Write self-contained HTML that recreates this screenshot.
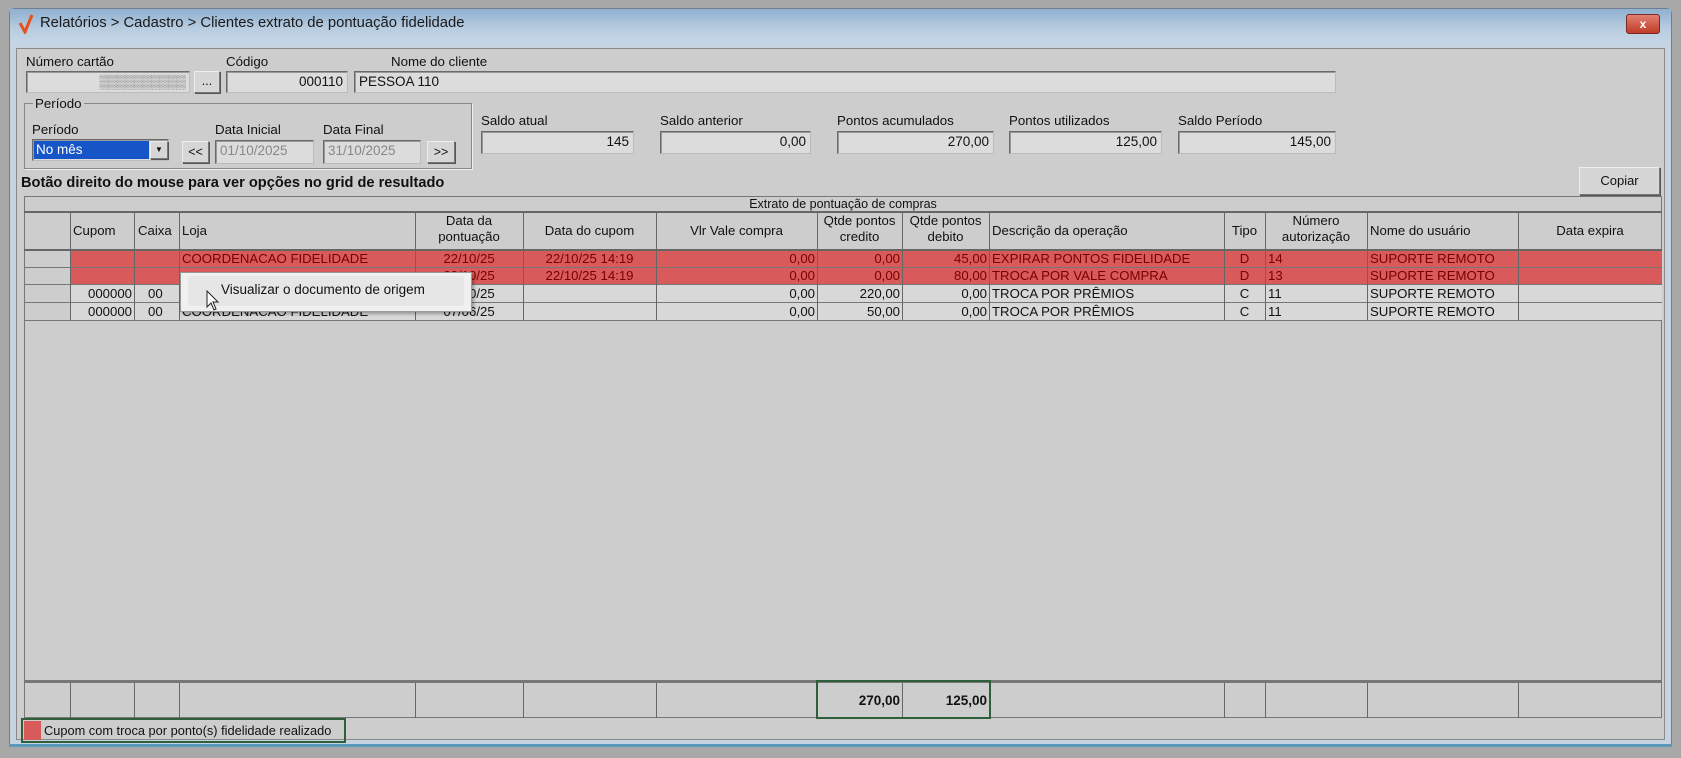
<!DOCTYPE html>
<html><head><meta charset="utf-8"><style>
*{box-sizing:border-box;margin:0;padding:0}
body{width:1681px;height:758px;background:#a8a8a8;font-family:"Liberation Sans",sans-serif;font-size:12px;color:#111;position:relative;overflow:hidden}
.a{position:absolute}
.win{left:9px;top:8px;width:1663px;height:739px;background:#c6d4e2;border:1px solid #6f7f90;border-radius:6px 6px 0 0}
.title{left:10px;top:9px;width:1661px;height:34px;background:linear-gradient(#8fb0d0,#b9cde0 60%,#c5d6e6)}
.panel{left:16px;top:48px;width:1649px;height:692px;background:#cdcdcd;border:1px solid #8a8a8a}
.lbl{position:absolute;font-size:13.3px;white-space:nowrap}
.fld{position:absolute;background:#dcdcdc;border:1px solid #6a6a6a;border-right-color:#bbb;border-bottom-color:#bbb;box-shadow:inset 1px 1px 0 #999;font-size:13.5px;line-height:20px;padding:0 4px;white-space:nowrap}
.r{text-align:right}
.btn{position:absolute;background:#d6d6d6;border:1px solid #777;border-top-color:#eee;border-left-color:#eee;box-shadow:1px 1px 0 #555;text-align:center;font-size:12.5px}
.grid{left:24px;top:196px;width:1638px;height:522px;background:#cdcdcd;border:1px solid #777}
.vl{position:absolute;width:1px;background:#666}
.hl{position:absolute;height:1px;background:#777}
.c{position:absolute;font-size:13.2px;white-space:nowrap;overflow:hidden;line-height:17px}
.red{background:#d95a5a}
.rt{color:#7a0000}
</style></head><body>
<div class="a win"></div>
<div class="a title"></div>
<svg class="a" style="left:18px;top:14px" width="16" height="20"><path d="M2 9 L7 18 L14 1" stroke="#e5501b" stroke-width="3" fill="none"/></svg>
<div class="lbl" style="left:40px;top:15px;font-size:14.8px;color:#1a1a1a">Relatórios &gt; Cadastro &gt; Clientes extrato de pontuação fidelidade</div>
<div class="a" style="left:1626px;top:14px;width:34px;height:20px;background:linear-gradient(#e08070,#c03a28);border:1px solid #7a2a20;border-radius:3px;color:#fff;font-weight:bold;text-align:center;line-height:18px;font-size:12px">x</div>
<div class="a panel"></div>

<div class="lbl" style="left:26px;top:54px">Número cartão</div>
<div class="fld" style="left:26px;top:71px;width:164px;height:22px;color:#777;letter-spacing:-1px;text-align:right">▒▒▒▒▒▒▒▒▒▒</div>
<div class="btn" style="left:194px;top:71px;width:26px;height:22px;line-height:18px">...</div>
<div class="lbl" style="left:226px;top:54px">Código</div>
<div class="fld r" style="left:226px;top:71px;width:122px;height:22px">000110</div>
<div class="lbl" style="left:391px;top:54px">Nome do cliente</div>
<div class="fld" style="left:354px;top:71px;width:982px;height:22px">PESSOA 110</div>

<div class="a" style="left:24px;top:103px;width:448px;height:66px;border:1px solid #888;box-shadow:1px 1px 0 #eee"></div>
<div class="lbl" style="left:33px;top:96px;background:#cdcdcd;padding:0 2px">Período</div>
<div class="lbl" style="left:32px;top:122px">Período</div>
<div class="fld" style="left:32px;top:139px;width:137px;height:22px;padding:1px"><div style="background:#1655c8;color:#fff;width:115px;height:18px;line-height:18px;padding-left:2px">No mês</div></div>
<div class="btn" style="left:150px;top:141px;width:18px;height:18px;font-size:8px;line-height:16px">▼</div>
<div class="btn" style="left:182px;top:141px;width:27px;height:22px;line-height:20px">&lt;&lt;</div>
<div class="lbl" style="left:215px;top:122px">Data Inicial</div>
<div class="fld" style="left:215px;top:140px;width:99px;height:24px;color:#888">01/10/2025</div>
<div class="lbl" style="left:323px;top:122px">Data Final</div>
<div class="fld" style="left:323px;top:140px;width:98px;height:24px;color:#888">31/10/2025</div>
<div class="btn" style="left:427px;top:141px;width:28px;height:22px;line-height:20px">&gt;&gt;</div>

<div class="lbl" style="left:481px;top:113px">Saldo atual</div>
<div class="fld r" style="left:481px;top:131px;width:153px;height:23px">145</div>
<div class="lbl" style="left:660px;top:113px">Saldo anterior</div>
<div class="fld r" style="left:660px;top:131px;width:151px;height:23px">0,00</div>
<div class="lbl" style="left:837px;top:113px">Pontos acumulados</div>
<div class="fld r" style="left:837px;top:131px;width:157px;height:23px">270,00</div>
<div class="lbl" style="left:1009px;top:113px">Pontos utilizados</div>
<div class="fld r" style="left:1009px;top:131px;width:153px;height:23px">125,00</div>
<div class="lbl" style="left:1178px;top:113px">Saldo Período</div>
<div class="fld r" style="left:1178px;top:131px;width:158px;height:23px">145,00</div>

<div class="lbl" style="left:21px;top:175px;font-weight:bold;font-size:14.6px">Botão direito do mouse para ver opções no grid de resultado</div>
<div class="btn" style="left:1579px;top:167px;width:81px;height:28px;line-height:26px;font-size:13px">Copiar</div>

<div class="a grid"></div>
<div class="c" style="left:24px;top:197px;width:1638px;text-align:center;line-height:14px;font-size:12.5px">Extrato de pontuação de compras</div>
<div class="hl" style="left:24px;top:211px;width:1638px;height:2px;background:#666"></div>
<div class="hl" style="left:24px;top:249px;width:1638px;height:2px;background:#666"></div>
<div class="a red" style="left:70px;top:251px;width:1592px;height:17px"></div>
<div class="a red" style="left:70px;top:268px;width:1592px;height:17px"></div>
<div class="a" style="left:70px;top:285px;width:1592px;height:35px;background:#d8d8d8"></div>
<div class="hl" style="left:24px;top:267px;width:1638px"></div>
<div class="hl" style="left:24px;top:284px;width:1638px"></div>
<div class="hl" style="left:24px;top:302px;width:1638px"></div>
<div class="hl" style="left:24px;top:320px;width:1638px"></div>
<div class="vl" style="left:70px;top:212px;height:108px"></div>
<div class="vl" style="left:134px;top:212px;height:108px"></div>
<div class="vl" style="left:179px;top:212px;height:108px"></div>
<div class="vl" style="left:415px;top:212px;height:108px"></div>
<div class="vl" style="left:523px;top:212px;height:108px"></div>
<div class="vl" style="left:656px;top:212px;height:108px"></div>
<div class="vl" style="left:817px;top:212px;height:108px"></div>
<div class="vl" style="left:902px;top:212px;height:108px"></div>
<div class="vl" style="left:989px;top:212px;height:108px"></div>
<div class="vl" style="left:1224px;top:212px;height:108px"></div>
<div class="vl" style="left:1265px;top:212px;height:108px"></div>
<div class="vl" style="left:1367px;top:212px;height:108px"></div>
<div class="vl" style="left:1518px;top:212px;height:108px"></div>
<div class="c" style="left:73px;top:222px">Cupom</div>
<div class="c" style="left:138px;top:222px">Caixa</div>
<div class="c" style="left:182px;top:222px">Loja</div>
<div class="c" style="left:415px;top:213px;width:108px;text-align:center;line-height:16px;white-space:normal">Data da<br>pontuação</div>
<div class="c" style="left:523px;top:222px;width:133px;text-align:center">Data do cupom</div>
<div class="c" style="left:656px;top:222px;width:161px;text-align:center">Vlr Vale compra</div>
<div class="c" style="left:817px;top:213px;width:85px;text-align:center;line-height:16px;white-space:normal">Qtde pontos<br>credito</div>
<div class="c" style="left:902px;top:213px;width:87px;text-align:center;line-height:16px;white-space:normal">Qtde pontos<br>debito</div>
<div class="c" style="left:992px;top:222px">Descrição da operação</div>
<div class="c" style="left:1224px;top:222px;width:41px;text-align:center">Tipo</div>
<div class="c" style="left:1265px;top:213px;width:102px;text-align:center;line-height:16px;white-space:normal">Número<br>autorização</div>
<div class="c" style="left:1370px;top:222px">Nome do usuário</div>
<div class="c" style="left:1518px;top:222px;width:144px;text-align:center">Data expira</div>
<div class="c rt" style="left:182px;top:250px">COORDENACAO FIDELIDADE</div>
<div class="c rt" style="left:415px;top:250px;width:108px;text-align:center">22/10/25</div>
<div class="c rt" style="left:523px;top:250px;width:133px;text-align:center">22/10/25 14:19</div>
<div class="c rt" style="left:656px;top:250px;width:159px;text-align:right">0,00</div>
<div class="c rt" style="left:817px;top:250px;width:83px;text-align:right">0,00</div>
<div class="c rt" style="left:902px;top:250px;width:85px;text-align:right">45,00</div>
<div class="c rt" style="left:992px;top:250px">EXPIRAR PONTOS FIDELIDADE</div>
<div class="c rt" style="left:1224px;top:250px;width:41px;text-align:center">D</div>
<div class="c rt" style="left:1268px;top:250px">14</div>
<div class="c rt" style="left:1370px;top:250px">SUPORTE REMOTO</div>
<div class="c rt" style="left:415px;top:267px;width:108px;text-align:center">22/10/25</div>
<div class="c rt" style="left:523px;top:267px;width:133px;text-align:center">22/10/25 14:19</div>
<div class="c rt" style="left:656px;top:267px;width:159px;text-align:right">0,00</div>
<div class="c rt" style="left:817px;top:267px;width:83px;text-align:right">0,00</div>
<div class="c rt" style="left:902px;top:267px;width:85px;text-align:right">80,00</div>
<div class="c rt" style="left:992px;top:267px">TROCA POR VALE COMPRA</div>
<div class="c rt" style="left:1224px;top:267px;width:41px;text-align:center">D</div>
<div class="c rt" style="left:1268px;top:267px">13</div>
<div class="c rt" style="left:1370px;top:267px">SUPORTE REMOTO</div>
<div class="c" style="left:70px;top:285px;width:62px;text-align:right">000000</div>
<div class="c" style="left:148px;top:285px">00</div>
<div class="c" style="left:415px;top:285px;width:108px;text-align:center">22/10/25</div>
<div class="c" style="left:656px;top:285px;width:159px;text-align:right">0,00</div>
<div class="c" style="left:817px;top:285px;width:83px;text-align:right">220,00</div>
<div class="c" style="left:902px;top:285px;width:85px;text-align:right">0,00</div>
<div class="c" style="left:992px;top:285px">TROCA POR PRÊMIOS</div>
<div class="c" style="left:1224px;top:285px;width:41px;text-align:center">C</div>
<div class="c" style="left:1268px;top:285px">11</div>
<div class="c" style="left:1370px;top:285px">SUPORTE REMOTO</div>
<div class="c" style="left:70px;top:303px;width:62px;text-align:right">000000</div>
<div class="c" style="left:148px;top:303px">00</div>
<div class="c" style="left:182px;top:303px">COORDENACAO FIDELIDADE</div>
<div class="c" style="left:415px;top:303px;width:108px;text-align:center">07/06/25</div>
<div class="c" style="left:656px;top:303px;width:159px;text-align:right">0,00</div>
<div class="c" style="left:817px;top:303px;width:83px;text-align:right">50,00</div>
<div class="c" style="left:902px;top:303px;width:85px;text-align:right">0,00</div>
<div class="c" style="left:992px;top:303px">TROCA POR PRÊMIOS</div>
<div class="c" style="left:1224px;top:303px;width:41px;text-align:center">C</div>
<div class="c" style="left:1268px;top:303px">11</div>
<div class="c" style="left:1370px;top:303px">SUPORTE REMOTO</div>
<div class="a" style="left:180px;top:272px;width:292px;height:40px;background:#f0f0f0;border:1px solid #999;box-shadow:2px 2px 3px rgba(0,0,0,.3)"></div>
<div class="a" style="left:188px;top:276px;width:276px;height:30px;background:#e6e6e6;border-radius:3px"></div>
<div class="lbl" style="left:221px;top:282px;font-size:13.5px">Visualizar o documento de origem</div>
<svg class="a" style="left:206px;top:290px" width="14" height="22"><path d="M1 1 L1 17 L5 13 L8 20 L10 19 L7 12 L12 12 Z" fill="#fff" stroke="#222" stroke-width="1"/></svg>

<div class="hl" style="left:24px;top:680px;width:1638px;height:3px;background:#777"></div>
<div class="vl" style="left:70px;top:683px;height:35px"></div>
<div class="vl" style="left:134px;top:683px;height:35px"></div>
<div class="vl" style="left:179px;top:683px;height:35px"></div>
<div class="vl" style="left:415px;top:683px;height:35px"></div>
<div class="vl" style="left:523px;top:683px;height:35px"></div>
<div class="vl" style="left:656px;top:683px;height:35px"></div>
<div class="vl" style="left:902px;top:683px;height:35px"></div>
<div class="vl" style="left:1224px;top:683px;height:35px"></div>
<div class="vl" style="left:1265px;top:683px;height:35px"></div>
<div class="vl" style="left:1367px;top:683px;height:35px"></div>
<div class="vl" style="left:1518px;top:683px;height:35px"></div>
<div class="a" style="left:816px;top:680px;width:175px;height:39px;border:2px solid #2f5f3a"></div>
<div class="c" style="left:817px;top:692px;width:83px;text-align:right;font-weight:bold;font-size:13.5px">270,00</div>
<div class="c" style="left:902px;top:692px;width:85px;text-align:right;font-weight:bold;font-size:13.5px">125,00</div>
<div class="a" style="left:21px;top:718px;width:325px;height:25px;border:2px solid #2f5f3a"></div>
<div class="a" style="left:24px;top:721px;width:17px;height:19px;background:#d95a5a"></div>
<div class="lbl" style="left:44px;top:723px;font-size:12.8px">Cupom com troca por ponto(s) fidelidade realizado</div>
<div class="a" style="left:9px;top:744px;width:1663px;height:3px;background:#5a9ab8"></div>
</body></html>
